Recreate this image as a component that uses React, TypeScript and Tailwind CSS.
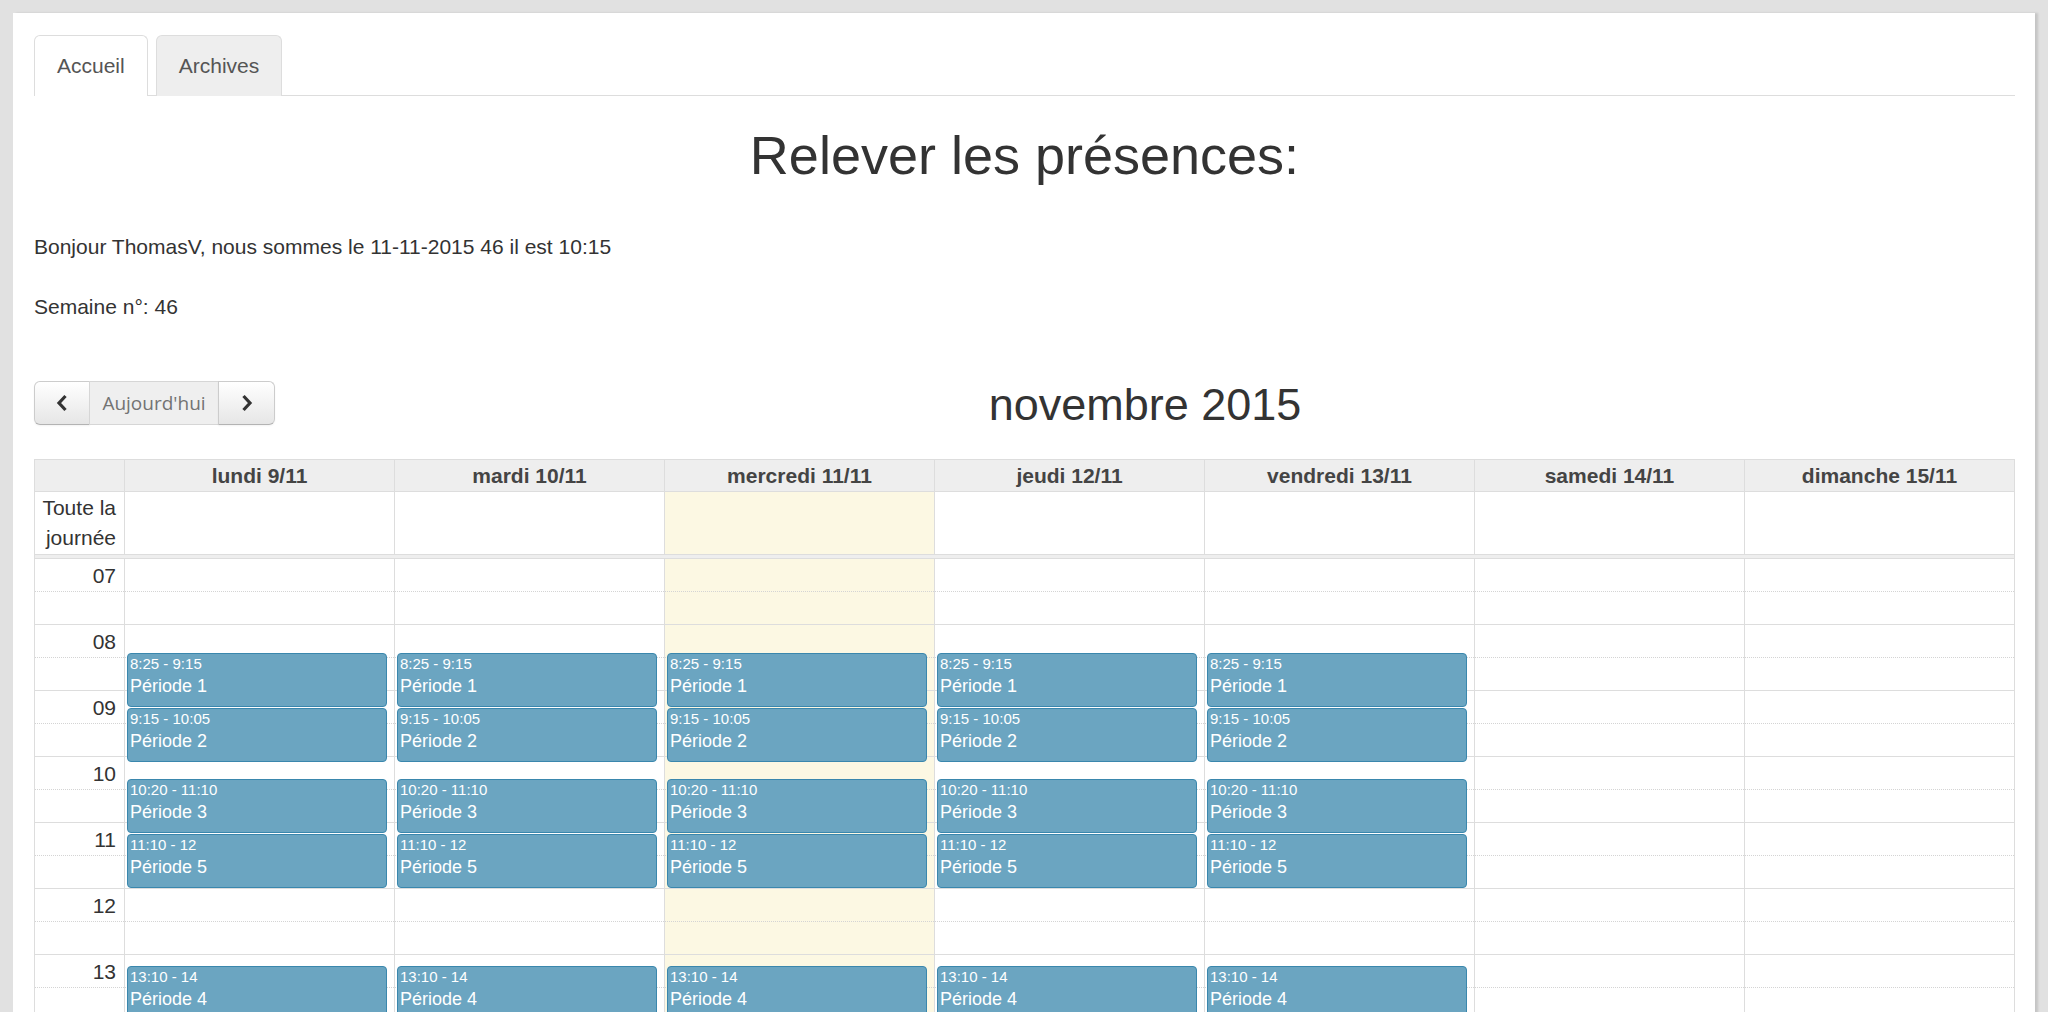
import React from 'react';

interface Period {
  from: [number, number];
  to: [number, number];
  time: string;
  title: string;
}

interface Day {
  name: string;
  school: boolean;
  today?: boolean;
}

const periods: Period[] = [
  { from: [8, 25], to: [9, 15], time: '8:25 - 9:15', title: 'Période 1' },
  { from: [9, 15], to: [10, 5], time: '9:15 - 10:05', title: 'Période 2' },
  { from: [10, 20], to: [11, 10], time: '10:20 - 11:10', title: 'Période 3' },
  { from: [11, 10], to: [12, 0], time: '11:10 - 12', title: 'Période 5' },
  { from: [13, 10], to: [14, 0], time: '13:10 - 14', title: 'Période 4' },
];

const days: Day[] = [
  { name: 'lundi 9/11', school: true },
  { name: 'mardi 10/11', school: true },
  { name: 'mercredi 11/11', school: true, today: true },
  { name: 'jeudi 12/11', school: true },
  { name: 'vendredi 13/11', school: true },
  { name: 'samedi 14/11', school: false },
  { name: 'dimanche 15/11', school: false },
];

const HOUR = 66;
const START = 7;
const SLOTS = 16;

const offset = (h: number, m: number) => (h - START) * HOUR + (m * HOUR) / 60;

const Slots: React.FC<{ labels?: boolean }> = ({ labels }) => (
  <>
    {Array.from({ length: SLOTS }).map((_, i) => (
      <div
        key={i}
        className={
          i % 2 === 0
            ? 'h-[33px] border-b border-dotted border-[#d4d4d4] pr-[8px] text-right text-[21px] leading-[33px] text-[#333]'
            : 'h-[33px] border-b border-solid border-[#ddd]'
        }
      >
        {labels && i % 2 === 0 ? String(START + i / 2).padStart(2, '0') : null}
      </div>
    ))}
  </>
);

const EventBlock: React.FC<{ p: Period }> = ({ p }) => {
  const top = offset(p.from[0], p.from[1]);
  const height = offset(p.to[0], p.to[1]) - top - 1;
  return (
    <div
      className="absolute left-[2px] right-[2.5%] overflow-hidden rounded-[4px] border border-[#3a87ad] bg-[#6ba5c1] px-[2px] text-white"
      style={{ top, height }}
    >
      <div className="text-[15px] leading-[20px]">{p.time}</div>
      <div className="text-[18px] leading-[25px]">{p.title}</div>
    </div>
  );
};

const Chevron: React.FC<{ dir: 'left' | 'right' }> = ({ dir }) => (
  <svg width="12" height="18" viewBox="0 0 12 18">
    <polyline
      points={dir === 'left' ? '9.5,2 3,9 9.5,16' : '2.5,2 9,9 2.5,16'}
      fill="none"
      stroke="#333"
      strokeWidth="3.2"
    />
  </svg>
);

const App: React.FC = () => {
  return (
    <div className="h-[1012px] overflow-hidden bg-[#e1e1e1] pl-[13px] pt-[13px] font-['Liberation_Sans',Arial,sans-serif] text-[#333]">
      <div className="h-[1100px] w-[2022px] bg-white pl-[21px] pr-[20px] pt-[22px] shadow-[3px_0_2px_rgba(0,0,0,0.12)]">
        {/* tabs */}
        <div className="flex gap-[8px] border-b border-[#ddd]">
          <div className="-mb-px rounded-t-[6px] border border-b-0 border-[#ddd] bg-white px-[22px] py-[15px] text-[21px] leading-[30px] text-[#555]">
            Accueil
          </div>
          <div className="-mb-px rounded-t-[6px] border border-b-0 border-[#ddd] bg-[#eee] px-[22px] py-[15px] text-[21px] leading-[30px] text-[#555]">
            Archives
          </div>
        </div>

        <h1 className="mt-[30px] text-center text-[54px] leading-[59px] font-normal">Relever les présences:</h1>

        <p className="mt-[47px] text-[21px] leading-[30px]">
          Bonjour ThomasV, nous sommes le 11-11-2015 46 il est 10:15
        </p>
        <p className="mt-[30px] text-[21px] leading-[30px]">Semaine n°: 46</p>

        {/* toolbar */}
        <div className="mt-[59px] flex h-[44px] items-center">
          <div className="flex h-[44px]">
            <button className="flex w-[56px] items-center justify-center rounded-l-[6px] border border-[#ccc] border-b-[#b3b3b3] bg-gradient-to-b from-white to-[#e6e6e6] shadow-[0_1px_2px_rgba(0,0,0,0.05)]">
              <Chevron dir="left" />
            </button>
            <button className="-ml-px flex w-[130px] items-center justify-center border border-[#d6d6d6] bg-[#efefef] font-['Open_Sans',sans-serif] text-[19px] text-[#737373]">
              Aujourd'hui
            </button>
            <button className="-ml-px flex w-[57px] items-center justify-center rounded-r-[6px] border border-[#ccc] border-b-[#b3b3b3] bg-gradient-to-b from-white to-[#e6e6e6] shadow-[0_1px_2px_rgba(0,0,0,0.05)]">
              <Chevron dir="right" />
            </button>
          </div>
          <h2 className="flex-1 pt-[3px] text-center text-[45px] leading-[50px] font-normal">novembre 2015</h2>
        </div>

        {/* calendar */}
        <div className="mt-[34px] border border-[#ddd]">
          <div className="grid grid-cols-[89px_repeat(7,minmax(0,1fr))] border-b border-[#ddd] bg-[#eee]">
            <div className="h-[31px]" />
            {days.map((d) => (
              <div key={d.name} className="h-[31px] border-l border-[#ddd] text-center text-[21px] leading-[31px] font-bold text-[#444]">
                {d.name}
              </div>
            ))}
          </div>

          <div className="grid grid-cols-[89px_repeat(7,minmax(0,1fr))]">
            <div className="h-[62px] pr-[8px] pt-[1px] text-right text-[21px] leading-[30px]">
              Toute la
              <br />
              journée
            </div>
            {days.map((d) => (
              <div key={d.name} className={d.today ? 'h-[62px] border-l border-[#ddd] bg-[#fcf8e3]' : 'h-[62px] border-l border-[#ddd]'} />
            ))}
          </div>

          <div className="h-[5px] border-y border-[#ddd] bg-[#eee]" />

          <div className="grid grid-cols-[89px_repeat(7,minmax(0,1fr))]">
            <div>
              <Slots labels />
            </div>
            {days.map((d) => (
              <div key={d.name} className={d.today ? 'relative border-l border-[#ddd] bg-[#fcf8e3]' : 'relative border-l border-[#ddd]'}>
                <Slots />
                {d.school && periods.map((p) => <EventBlock key={p.title} p={p} />)}
              </div>
            ))}
          </div>
        </div>
      </div>
    </div>
  );
};

export default App;
